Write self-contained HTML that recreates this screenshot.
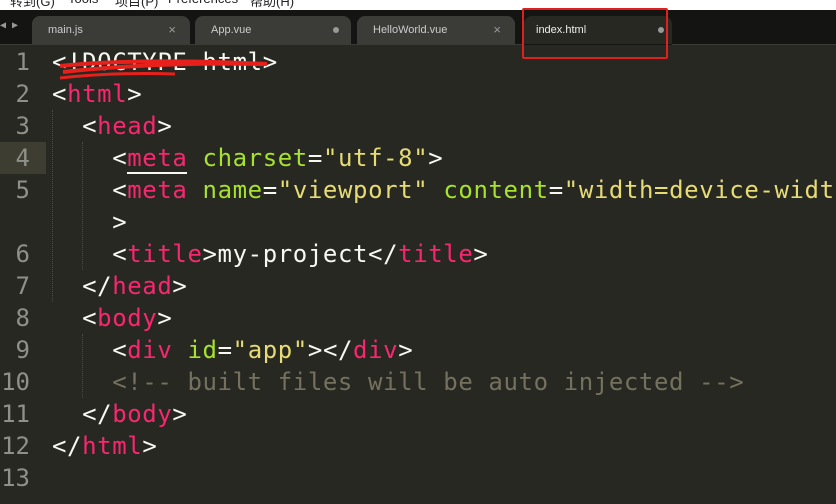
<!DOCTYPE html>
<html><head><style>
body{margin:0;width:836px;height:504px;overflow:hidden;background:#272822;position:relative;font-family:"DejaVu Sans Mono","Liberation Mono",monospace}
.top{position:absolute;left:0;top:0;width:836px;height:10px;background:#fff;overflow:hidden}
.top span{position:absolute;top:-9px;font:13px "Liberation Sans","Noto Sans CJK SC",sans-serif;color:#222}
.bar{position:absolute;left:0;top:10px;width:836px;height:35px;background:#141412}
.tab{position:absolute;top:16px;height:28px;background:#3b3b37;border-radius:8px 8px 0 0;font:11px "Liberation Sans",sans-serif;color:#ccc;line-height:28px;padding-left:16px;box-sizing:border-box}
.tab .x{position:absolute;right:14px;top:0;color:#999;font-size:13px}
.tab .d{position:absolute;right:12px;top:11px;width:6px;height:6px;border-radius:3px;background:#999}
.sep{position:absolute;left:0;top:44px;width:836px;height:1px;background:#3a3a36}
.hl{position:absolute;left:0;top:142px;width:46px;height:32px;background:#3e3d32}
.ln{position:absolute;left:0;width:30px;text-align:right;color:#8f908a;font-size:24px;line-height:32px}
.code{position:absolute;left:52px;font-size:24px;line-height:32px;color:#f8f8f2;white-space:pre;letter-spacing:0.6px}
.t{color:#f92672}.a{color:#a6e22e}.s{color:#e6db74}.c{color:#75715e}
.guide{position:absolute;width:0;border-left:1px dotted #4a4a44}
</style></head><body>
<div class="top"><span style="left:10px">转到(G)</span><span style="left:68px">Tools</span><span style="left:115px">项目(P)</span><span style="left:168px">Preferences</span><span style="left:250px">帮助(H)</span></div>
<div class="bar"></div>
<div style="position:absolute;left:0;top:20px;color:#999;font-size:10px">◀ ▶</div>
<div class="tab" style="left:32px;width:158px">main.js<span class="x">×</span></div>
<div class="tab" style="left:195px;width:156px">App.vue<span class="d"></span></div>
<div class="tab" style="left:357px;width:158px">HelloWorld.vue<span class="x">×</span></div>
<div class="tab" style="left:524px;width:148px;background:#272822;color:#eee;padding-left:12px">index.html<span class="d" style="right:8px"></span></div>
<div class="sep" style="left:0;width:524px"></div><div class="sep" style="left:672px;width:164px"></div>
<div style="position:absolute;left:522px;top:8px;width:142px;height:47px;border:2px solid #e0201c;border-radius:2px"></div>
<div class="hl"></div>
<div class="guide" style="left:52px;top:110px;height:192px"></div>
<div class="guide" style="left:82px;top:142px;height:128px"></div>
<div class="guide" style="left:82px;top:334px;height:64px"></div>
<div class="ln" style="top:46px">1</div><div class="ln" style="top:78px">2</div><div class="ln" style="top:110px">3</div><div class="ln" style="top:142px">4</div><div class="ln" style="top:174px">5</div><div class="ln" style="top:238px">6</div><div class="ln" style="top:270px">7</div><div class="ln" style="top:302px">8</div><div class="ln" style="top:334px">9</div><div class="ln" style="top:366px">10</div><div class="ln" style="top:398px">11</div><div class="ln" style="top:430px">12</div><div class="ln" style="top:462px">13</div>
<div class="code" style="top:46px">&lt;!DOCTYPE html&gt;</div>
<div class="code" style="top:78px">&lt;<span class="t">html</span>&gt;</div>
<div class="code" style="top:110px">  &lt;<span class="t">head</span>&gt;</div>
<div class="code" style="top:142px">    &lt;<span class="t" style="border-bottom:2px solid #f8f8f2">meta</span> <span class="a">charset</span>=<span class="s">"utf-8"</span>&gt;</div>
<div class="code" style="top:174px">    &lt;<span class="t">meta</span> <span class="a">name</span>=<span class="s">"viewport"</span> <span class="a">content</span>=<span class="s">"width=device-width</span></div>
<div class="code" style="top:206px">    &gt;</div>
<div class="code" style="top:238px">    &lt;<span class="t">title</span>&gt;my-project&lt;/<span class="t">title</span>&gt;</div>
<div class="code" style="top:270px">  &lt;/<span class="t">head</span>&gt;</div>
<div class="code" style="top:302px">  &lt;<span class="t">body</span>&gt;</div>
<div class="code" style="top:334px">    &lt;<span class="t">div</span> <span class="a">id</span>=<span class="s">"app"</span>&gt;&lt;/<span class="t">div</span>&gt;</div>
<div class="code c" style="top:366px">    &lt;!-- built files will be auto injected --&gt;</div>
<div class="code" style="top:398px">  &lt;/<span class="t">body</span>&gt;</div>
<div class="code" style="top:430px">&lt;/<span class="t">html</span>&gt;</div>
<svg style="position:absolute;left:55px;top:52px" width="220" height="30"><path d="M5 14 Q80 6 212 12" stroke="#e8201c" stroke-width="4" fill="none"/><path d="M8 20 Q100 10 208 12" stroke="#e8201c" stroke-width="4" fill="none"/><path d="M5 26 Q60 20 120 22" stroke="#e8201c" stroke-width="3" fill="none"/></svg>
</body></html>
